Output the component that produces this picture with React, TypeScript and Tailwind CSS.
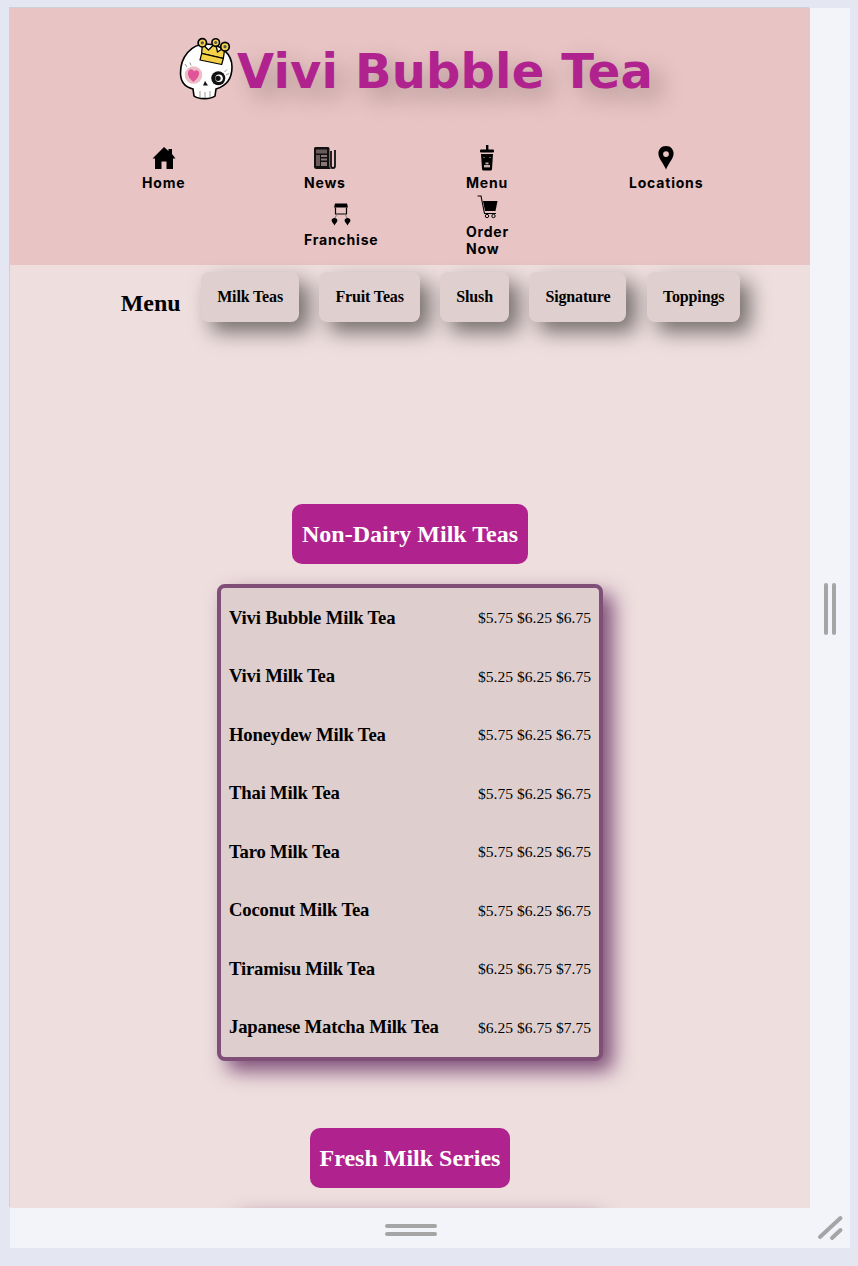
const serif = "font-['Liberation_Serif','Times_New_Roman',serif]";

const HomeIcon = () => (
  <svg width="24" height="24" viewBox="0 0 24 24" fill="#000">
    <path d="M12 1 L16.5 5 V3 H20 V8 L23.5 12.5 H21 V23 H14.5 V15.5 H9.5 V23 H3 V12.5 H0.5 Z" />
  </svg>
);

const NewsIcon = () => (
  <svg width="24" height="24" viewBox="0 0 24 24">
    <path d="M1 2.5 Q1 1 2.5 1 H15 Q16.5 1 16.5 2.5 V20 Q16.5 23 19 23 H3.5 Q1 23 1 20.5 Z" fill="#111" />
    <rect x="3" y="3.5" width="11" height="4" fill="#6b5a5a" />
    <rect x="3" y="9" width="4" height="11" fill="#6b5a5a" />
    <rect x="8" y="9" width="6" height="2" fill="#8b7676" />
    <rect x="8" y="12.5" width="6" height="2" fill="#8b7676" />
    <rect x="8" y="16" width="6" height="4" fill="#8b7676" />
    <path d="M18 5 V20 Q18 22 20 22 Q22 22 22 20 V4" fill="none" stroke="#111" strokeWidth="1.8" />
  </svg>
);

const CupIcon = () => (
  <svg width="24" height="26" viewBox="0 0 24 26" fill="#000">
    <rect x="11" y="0" width="2.4" height="7" />
    <rect x="5" y="4.5" width="14" height="3" rx="1" />
    <path d="M6 9 H18 L17 24 Q17 25.5 15.5 25.5 H8.5 Q7 25.5 7 24 Z" />
    <rect x="9" y="20" width="6" height="2.4" fill="#c9b0b0" />
    <rect x="10.5" y="17.5" width="3" height="1.8" fill="#c9b0b0" />
    <rect x="8" y="12" width="2" height="1" fill="#6b5a5a" />
    <rect x="14" y="12" width="2" height="1" fill="#6b5a5a" />
  </svg>
);

const PinIcon = () => (
  <svg width="16" height="24" viewBox="0 0 16 24">
    <path
      fillRule="evenodd"
      d="M8 0 C3.2 0 0.4 3.6 0.4 7.6 C0.4 12.6 5.6 17.6 8 23.5 C10.4 17.6 15.6 12.6 15.6 7.6 C15.6 3.6 12.8 0 8 0 Z M8 5.2 A2.9 2.9 0 1 1 8 11 A2.9 2.9 0 1 1 8 5.2 Z"
      fill="#000"
    />
  </svg>
);

const FranchiseIcon = () => (
  <svg width="20" height="23" viewBox="0 0 20 23" fill="#000">
    <path d="M4 0.5 H16 L17 4.5 H3 Z" />
    <path d="M4.5 4.5 V11 H15.5 V4.5" fill="none" stroke="#000" strokeWidth="1.2" />
    <path d="M6 11 L4 15 M14 11 L16 15" stroke="#8b7676" strokeWidth="1" />
    <path d="M3.5 15 C1.8 15 0.6 16.2 0.6 17.6 C0.6 19.2 2.6 20.6 3.5 22.5 C4.4 20.6 6.4 19.2 6.4 17.6 C6.4 16.2 5.2 15 3.5 15 Z" />
    <path d="M16.5 15 C14.8 15 13.6 16.2 13.6 17.6 C13.6 19.2 15.6 20.6 16.5 22.5 C17.4 20.6 19.4 19.2 19.4 17.6 C19.4 16.2 18.2 15 16.5 15 Z" />
  </svg>
);

const CartIcon = () => (
  <svg width="22" height="24" viewBox="0 0 22 24">
    <path d="M0.5 1 H4 L7.5 18.5 H19" fill="none" stroke="#000" strokeWidth="1.1" />
    <path d="M6 6 H20.5 L18.5 16 H8 Z" fill="#000" />
    <circle cx="10" cy="21" r="1.7" fill="none" stroke="#000" strokeWidth="1" />
    <circle cx="16.5" cy="21" r="1.7" fill="none" stroke="#000" strokeWidth="1" />
  </svg>
);

const SkullLogo = () => (
  <svg width="56" height="64" viewBox="0 0 56 64" className="shrink-0">
    <path d="M27 7 C12 7 1.5 20 1.5 36 C1.5 44 6 50 14 52 L15 59 C19 62.5 32 62.5 36 59 L37 52 C47 49 53 42 53 30 C53 17 42 7 27 7 Z" fill="#fff" stroke="#000" strokeWidth="1.6" />
    <circle cx="14.5" cy="38" r="8.8" fill="#eebcc4" />
    <path d="M14.5 45 C9.5 41 8 37.5 9.5 34 C11 31.5 14 32 15 34.5 C16.5 32.5 19.5 33 20 35.5 C20.5 38.5 18 42 14.5 45 Z" fill="#e0559a" />
    <circle cx="39.3" cy="41.3" r="7" fill="#111" />
    <circle cx="40" cy="41.3" r="3.8" fill="#fff" />
    <circle cx="39" cy="41.3" r="2.6" fill="#111" />
    <path d="M45.5 35 L48 32.5 M47 38 L50 36.5 M8 30 L6 27 M12 28.5 L11 25.5" stroke="#777" strokeWidth="0.8" />
    <path d="M26 44 L29 48.5 L24 48.5 Z" fill="#111" />
    <path d="M21 54 V60 M26 55 V61 M31 54 V60" stroke="#999" strokeWidth="1" />
    <path d="M22.7 16.5 L23.3 7 L29.5 13 L36.5 6 L38.5 15 L46 10 L44.3 21.5 Z" fill="#f3d24a" stroke="#000" strokeWidth="1.3" strokeLinejoin="round" />
    <path d="M22.7 16.5 L44.3 21.5 L42.7 27.5 L21 23 Z" fill="#f3d24a" stroke="#000" strokeWidth="1.2" strokeLinejoin="round" />
    <circle cx="23.3" cy="5.8" r="4.2" fill="#f3d24a" stroke="#000" strokeWidth="1.7" />
    <circle cx="23.3" cy="5.8" r="1.6" fill="#555" />
    <circle cx="36.7" cy="5.6" r="3.8" fill="#f3d24a" stroke="#000" strokeWidth="1.6" />
    <circle cx="36.7" cy="5.6" r="1.5" fill="#555" />
    <circle cx="46" cy="9.7" r="4.3" fill="#f3d24a" stroke="#000" strokeWidth="1.7" />
    <circle cx="46" cy="9.7" r="1.6" fill="#555" />
  </svg>
);

const navRows = [
  [
    { label: ["Home"], icon: <HomeIcon />, nudge: "" },
    { label: ["News"], icon: <NewsIcon />, nudge: "" },
    { label: ["Menu"], icon: <CupIcon />, nudge: "" },
    { label: ["Locations"], icon: <PinIcon />, nudge: "pl-[57px]" },
  ],
  [
    { label: ["Franchise"], icon: <FranchiseIcon />, nudge: "pb-[2px]" },
    { label: ["Order", "Now"], icon: <CartIcon />, nudge: "" },
  ],
];

const tabs = ["Milk Teas", "Fruit Teas", "Slush", "Signature", "Toppings"];

const nonDairy = [
  ["Vivi Bubble Milk Tea", "$5.75 $6.25 $6.75"],
  ["Vivi Milk Tea", "$5.25 $6.25 $6.75"],
  ["Honeydew Milk Tea", "$5.75 $6.25 $6.75"],
  ["Thai Milk Tea", "$5.75 $6.25 $6.75"],
  ["Taro Milk Tea", "$5.75 $6.25 $6.75"],
  ["Coconut Milk Tea", "$5.75 $6.25 $6.75"],
  ["Tiramisu Milk Tea", "$6.25 $6.75 $7.75"],
  ["Japanese Matcha Milk Tea", "$6.25 $6.75 $7.75"],
];

const SectionTitle = ({ title }: { title: string }) => (
  <h2 className="mx-auto w-fit h-[60px] flex items-center px-[10px] rounded-[10px] bg-[#b0238f] text-white text-[24px] font-bold">
    {title}
  </h2>
);

const PriceCard = ({ rows }: { rows: string[][] }) => (
  <div className="mx-auto mt-5 w-[386px] border-4 border-[#7f4f78] rounded-[8px] bg-[#dfcece] px-2 pt-[0.5px] shadow-[10px_10px_20px_#7f4f78]">
    {rows.map(([name, price]) => (
      <div key={name} className="h-[58.5px] flex items-center justify-between text-black">
        <span className="text-[18.72px] tracking-[-0.2px] font-bold">{name}</span>
        <span className="text-[15.6px]">{price}</span>
      </div>
    ))}
  </div>
);

const Header = () => (
  <header className="h-[257px] bg-[#e9c4c4] pt-[29px]">
    <div className="flex justify-center items-start pl-[12px] h-[108px]">
      <SkullLogo />
      <h1 className="ml-[2px] mt-[4px] text-[48px] leading-[60px] tracking-[0.15px] font-bold whitespace-nowrap text-[#b0238f] font-['DejaVu_Sans',sans-serif] [text-shadow:10px_10px_24px_rgba(0,0,0,0.28)]">
        Vivi Bubble Tea
      </h1>
    </div>
    {navRows.map((row, i) => (
      <nav key={i} className="flex justify-center items-center mb-[3px]">
        {row.map((item) => (
          <a key={item.label[0]} className={`w-[162px] pl-[56px] flex ${item.nudge}`}>
            <span className="flex flex-col items-center font-['Inter',sans-serif] text-[14px] leading-[17px] font-bold tracking-[0.8px] text-black">
              <span className="h-[26px] flex items-center">{item.icon}</span>
              <span className="mt-[3px] w-max">
                {item.label.map((l) => (
                  <span key={l} className="block">{l}</span>
                ))}
              </span>
            </span>
          </a>
        ))}
      </nav>
    ))}
  </header>
);

const App = () => {
  return (
    <div className={`h-[1266px] w-[858px] overflow-hidden bg-[#e4e7f2] pl-[10px] pt-[8px] ${serif}`}>
      <div className="w-[840px] h-[1240px] bg-[#f3f3fa] grid grid-cols-[800px_40px] grid-rows-[1200px_40px]">
        <div className="overflow-hidden bg-[#eedede] shadow-[-1px_-1px_0_#cfcfd6]">
          <Header />
          <div className="flex justify-center items-start gap-[20.5px] h-[239px] pt-[7px] pl-[41px]">
            <h2 className="mt-[17px] text-[24px] leading-[28px] font-bold text-black">Menu</h2>
            {tabs.map((tab) => (
              <div
                key={tab}
                className="h-[50px] px-4 flex items-center rounded-[8px] bg-[#e0cfcf] text-[16px] tracking-[-0.15px] font-bold text-black shadow-[10px_10px_20px_rgba(0,0,0,0.5)]"
              >
                {tab}
              </div>
            ))}
          </div>
          <SectionTitle title="Non-Dairy Milk Teas" />
          <PriceCard rows={nonDairy} />
          <div className="h-[67.5px]" />
          <SectionTitle title="Fresh Milk Series" />
          {/* next card starts below the fold, only its shadow shows */}
          <div className="mx-auto mt-5 w-[366px] h-[120px] border-4 border-[#7f4f78] rounded-[8px] bg-[#dfcece] shadow-[10px_10px_20px_#7f4f78]" />
        </div>
        <div className="flex items-center justify-center gap-1 pt-[2px]">
          <span className="w-1 h-[52px] rounded-sm bg-[#a5a5a5]" />
          <span className="w-1 h-[52px] rounded-sm bg-[#a5a5a5]" />
        </div>
        <div className="flex flex-col items-center justify-center gap-1 pt-[4px] pl-[2px]">
          <span className="h-1 w-[52px] rounded-sm bg-[#a5a5a5]" />
          <span className="h-1 w-[52px] rounded-sm bg-[#a5a5a5]" />
        </div>
        <div className="flex items-center justify-center">
          <svg width="40" height="40" viewBox="0 0 40 40">
            <path d="M10 29 L30.5 10 M22 30 L30.5 22" stroke="#a5a5a5" strokeWidth="4" strokeLinecap="round" />
          </svg>
        </div>
      </div>
    </div>
  );
};

export default App;
